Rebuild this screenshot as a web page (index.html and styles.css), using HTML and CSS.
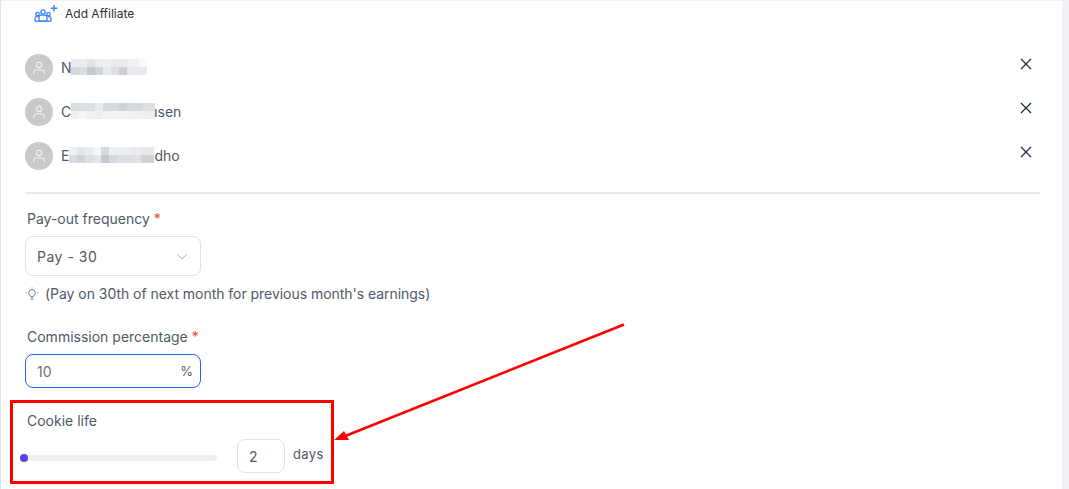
FILE: index.html
```html
<!DOCTYPE html>
<html lang="en">
<head>
    <meta charset="UTF-8">
    <title>Add Affiliate</title>
    <link rel="stylesheet" href="styles.css">
</head>
<body>

<div class="panel">
    <div class="add-row">
        <svg class="add-icon" width="24" height="17" viewBox="0 0 24 17" fill="none" stroke="#3b82f6" stroke-width="1.3">
            <circle cx="3.500" cy="9" r="1.700"/>
            <circle cx="9" cy="7" r="2.100"/>
            <circle cx="14.500" cy="9" r="1.700"/>
            <path d="M1 16.200v-2.700a1.800 1.800 0 0 1 1.800-1.800h1.700"/>
            <path d="M17 16.200v-2.700a1.800 1.800 0 0 0-1.800-1.800h-1.700"/>
            <path d="M5 16.200v-3.700a2.300 2.300 0 0 1 2.300-2.300h3.400a2.300 2.300 0 0 1 2.300 2.300v3.700z"/>
            <path d="M1 16.200h16"/>
            <path d="M20 0v6.500M16.800 3.200h6.500" stroke-width="1.500"/>
        </svg>
        <span>Add Affiliate</span>
    </div>

    <ul class="affiliates">
        <li class="affiliate">
            <span class="avatar">
                <svg width="14" height="14" viewBox="0 0 16 16" fill="none" stroke="#f4f4f4" stroke-width="1.200"><circle cx="8" cy="4.500" r="3"/><path d="M2 15v-1.500a3.500 3.500 0 0 1 3.500-3.500h5a3.500 3.500 0 0 1 3.500 3.500v1.500"/></svg>
            </span>
            <span class="name">N<span class="blur blur-one"></span></span>
            <svg class="remove" width="12" height="12" viewBox="0 0 12 12" stroke="#1f2f46" stroke-width="1.300"><path d="M1 1l10 10M11 1L1 11"/></svg>
        </li>
        <li class="affiliate">
            <span class="avatar">
                <svg width="14" height="14" viewBox="0 0 16 16" fill="none" stroke="#f4f4f4" stroke-width="1.200"><circle cx="8" cy="4.500" r="3"/><path d="M2 15v-1.500a3.500 3.500 0 0 1 3.500-3.500h5a3.500 3.500 0 0 1 3.500 3.500v1.500"/></svg>
            </span>
            <span class="name">C<span class="blur blur-two"></span>usen</span>
            <svg class="remove" width="12" height="12" viewBox="0 0 12 12" stroke="#1f2f46" stroke-width="1.300"><path d="M1 1l10 10M11 1L1 11"/></svg>
        </li>
        <li class="affiliate">
            <span class="avatar">
                <svg width="14" height="14" viewBox="0 0 16 16" fill="none" stroke="#f4f4f4" stroke-width="1.200"><circle cx="8" cy="4.500" r="3"/><path d="M2 15v-1.500a3.500 3.500 0 0 1 3.500-3.500h5a3.500 3.500 0 0 1 3.500 3.500v1.500"/></svg>
            </span>
            <span class="name">E<span class="blur blur-three"></span>dho</span>
            <svg class="remove" width="12" height="12" viewBox="0 0 12 12" stroke="#1f2f46" stroke-width="1.300"><path d="M1 1l10 10M11 1L1 11"/></svg>
        </li>
    </ul>

    <hr class="divider">

    <label class="field-label">Pay-out frequency <span class="req">*</span></label>
    <div class="select-box">
        <span>Pay - 30</span>
        <svg width="12" height="7" viewBox="0 0 12 7" fill="none" stroke="#b4b8c0" stroke-width="1"><path d="M1 1l5 5 5-5"/></svg>
    </div>
    <p class="hint">
        <svg width="14" height="14" viewBox="0 0 14 14" fill="none" stroke="#6b7280" stroke-width="0.900"><path d="M7 2.500a3.300 3.300 0 0 0-2 5.900c.5.400.7.800.8 1.300h2.400c.1-.5.300-.9.800-1.300a3.300 3.300 0 0 0-2-5.900z"/><path d="M5.800 11.200h2.400M6.300 12.800h1.400M7 .5v.8M1.800 6h-1M13.200 6h-1"/></svg>
        (Pay on 30th of next month for previous month's earnings)
    </p>

    <label class="field-label commission">Commission percentage <span class="req">*</span></label>
    <div class="percent-box">
        <span>10</span>
        <span class="percent">%</span>
    </div>

    <label class="field-label cookie">Cookie life</label>
    <div class="cookie-row">
        <div class="slider"><span class="thumb"></span></div>
        <div class="days-box">2</div>
        <span class="days">days</span>
    </div>
</div>

<!-- annotation drawn over the screenshot -->
<div class="mark-box"></div>
<svg class="mark-arrow" width="300" height="125" viewBox="0 0 300 125" fill="none">
    <path d="M291 1.500L11 113.500" stroke="#ff0000" stroke-width="2.500"/>
    <path d="M1 117L11 108L16 117z" fill="#ff0000"/>
</svg>

</body>
</html>
```

FILE: styles.css
```css
html, body {
    margin: 0;
    height: 100%;
    overflow: hidden;
}
body {
    font-family: Inter, "Noto Sans", sans-serif;
    background-color: #f1f1f6;
    position: relative;
}
.panel {
    width: 1062px;
    height: 489px;
    box-sizing: border-box;
    background-color: #ffffff;
    border-left: 1px solid #e2e2e4;
    border-top: 1px solid #f2f2f4;
    padding: 0 22px 0 24px;
    color: #4f5968;
    font-size: 14px;
}
.add-row {
    display: flex;
    align-items: center;
    height: 25px;
    padding-left: 9px;
    gap: 7px;
    font-size: 12px;
    color: #2a2f38;
}
.add-icon {
    flex: none;
}
.affiliates {
    list-style: none;
    margin: 28px 0 0;
    padding: 0;
}
.affiliate {
    display: flex;
    align-items: center;
    height: 28px;
    margin-bottom: 16px;
}
.avatar {
    width: 28px;
    height: 28px;
    border-radius: 50%;
    background-color: #c9c9c9;
    display: flex;
    align-items: center;
    justify-content: center;
    margin-right: 8px;
    flex: none;
}
.name {
    flex: 1;
    display: flex;
    align-items: center;
    margin-top: -2px;
}
.blur {
    display: inline-block;
    height: 16px;
    background-repeat: no-repeat;
    background-size: 100% 8px;
    background-position: top left, bottom left;
}
.blur-one {
    width: 76px;
    margin-left: -1px;
    background-image:
        linear-gradient(90deg, #e9ebee 0 8px, #e9ebee 8px 16px, #dfe2e6 16px 24px, #ecedf0 24px 32px, #eef0f2 32px 40px, #e8eaed 40px 48px, #ebecef 48px 56px, #f0f1f3 56px 68px, #fafafb 68px),
        linear-gradient(90deg, #d5d8dd 0 8px, #dadde1 8px 16px, #c4c9d0 16px 24px, #d0d4d9 24px 32px, #e8eaed 32px 40px, #dcdfe3 40px 48px, #c9cdd4 48px 56px, #e8eaed 56px);
}
.blur-two {
    width: 84px;
    margin-right: -6px;
    position: relative;
    background-image:
        linear-gradient(90deg, #d9dce0 0 8px, #dcdfe3 8px 24px, #e8eaed 24px 32px, #d5d8dd 32px 48px, #cfd3d8 48px 56px, #d5d8dd 56px 72px, #dcdfe3 72px),
        linear-gradient(90deg, #eef0f2 0 8px, #f6f7f8 8px 16px, #f1f2f4 16px 24px, #eceef0 24px 32px, #f3f4f6 32px 56px, #f0f1f3 56px 72px, #eceef0 72px);
}
.blur-three {
    width: 85px;
    background-image:
        linear-gradient(90deg, #f0f1f3 0 8px, #e4e6e9 8px 16px, #e9ebee 16px 24px, #f6f7f8 24px 32px, #d5d8dd 32px 40px, #eceef0 40px 64px, #e9ebee 64px 72px, #e6e8eb 72px),
        linear-gradient(90deg, #d9dce0 0 8px, #cfd3d8 8px 16px, #dcdfe3 16px 24px, #e4e6e9 24px 32px, #c4c9d0 32px 40px, #d5d8dd 40px 48px, #dcdfe3 48px 64px, #e0e2e6 64px 72px, #cfd3d8 72px);
}
.remove {
    flex: none;
    margin-right: 8px;
    margin-top: -8px;
}
.divider {
    border: 0;
    height: 2px;
    background-color: #e9e9ec;
    margin: 22px 0 0;
}
.field-label {
    display: block;
    padding-left: 2px;
    line-height: 20px;
    margin-top: 15px;
}
.req {
    color: #ef4444;
}
.select-box {
    width: 176px;
    height: 40px;
    box-sizing: border-box;
    margin-top: 7px;
    padding: 0 12px 0 11px;
    border: 1px solid #e2e3e8;
    border-radius: 8px;
    display: flex;
    align-items: center;
    justify-content: space-between;
    letter-spacing: 0.5px;
}
.hint {
    display: flex;
    align-items: center;
    gap: 6px;
    margin: 9px 0 0;
    line-height: 18px;
    letter-spacing: -0.04px;
}
.field-label.commission {
    margin-top: 24px;
}
.percent-box {
    width: 176px;
    height: 34px;
    box-sizing: border-box;
    margin-top: 7px;
    padding: 0 7px 0 11px;
    border: 1px solid #2563eb;
    border-radius: 8px;
    display: flex;
    align-items: center;
    justify-content: space-between;
    color: #6b7280;
}
.percent {
    font-size: 13px;
    color: #4f5968;
}
.field-label.cookie {
    margin-top: 23px;
}
.cookie-row {
    display: flex;
    align-items: center;
    margin-top: 8px;
    margin-left: -1px;
}
.slider {
    width: 193px;
    height: 6px;
    margin-top: 3px;
    background-color: #f3eef0;
    border-radius: 3px;
    position: relative;
}
.thumb {
    position: absolute;
    left: -4px;
    top: -1px;
    width: 8px;
    height: 8px;
    border-radius: 50%;
    background-color: #4f46e5;
}
.days-box {
    width: 48px;
    height: 34px;
    box-sizing: border-box;
    margin-left: 20px;
    padding-left: 11px;
    border: 1px solid #e2e3e8;
    border-radius: 8px;
    display: flex;
    align-items: center;
}
.days {
    margin-left: 8px;
    margin-top: -5px;
    font-size: 13px;
    letter-spacing: 0.4px;
}
.mark-box {
    position: absolute;
    left: 10px;
    top: 400px;
    width: 324px;
    height: 84px;
    box-sizing: border-box;
    border: 3px solid #ff0000;
}
.mark-arrow {
    position: absolute;
    left: 333px;
    top: 323px;
}
```
